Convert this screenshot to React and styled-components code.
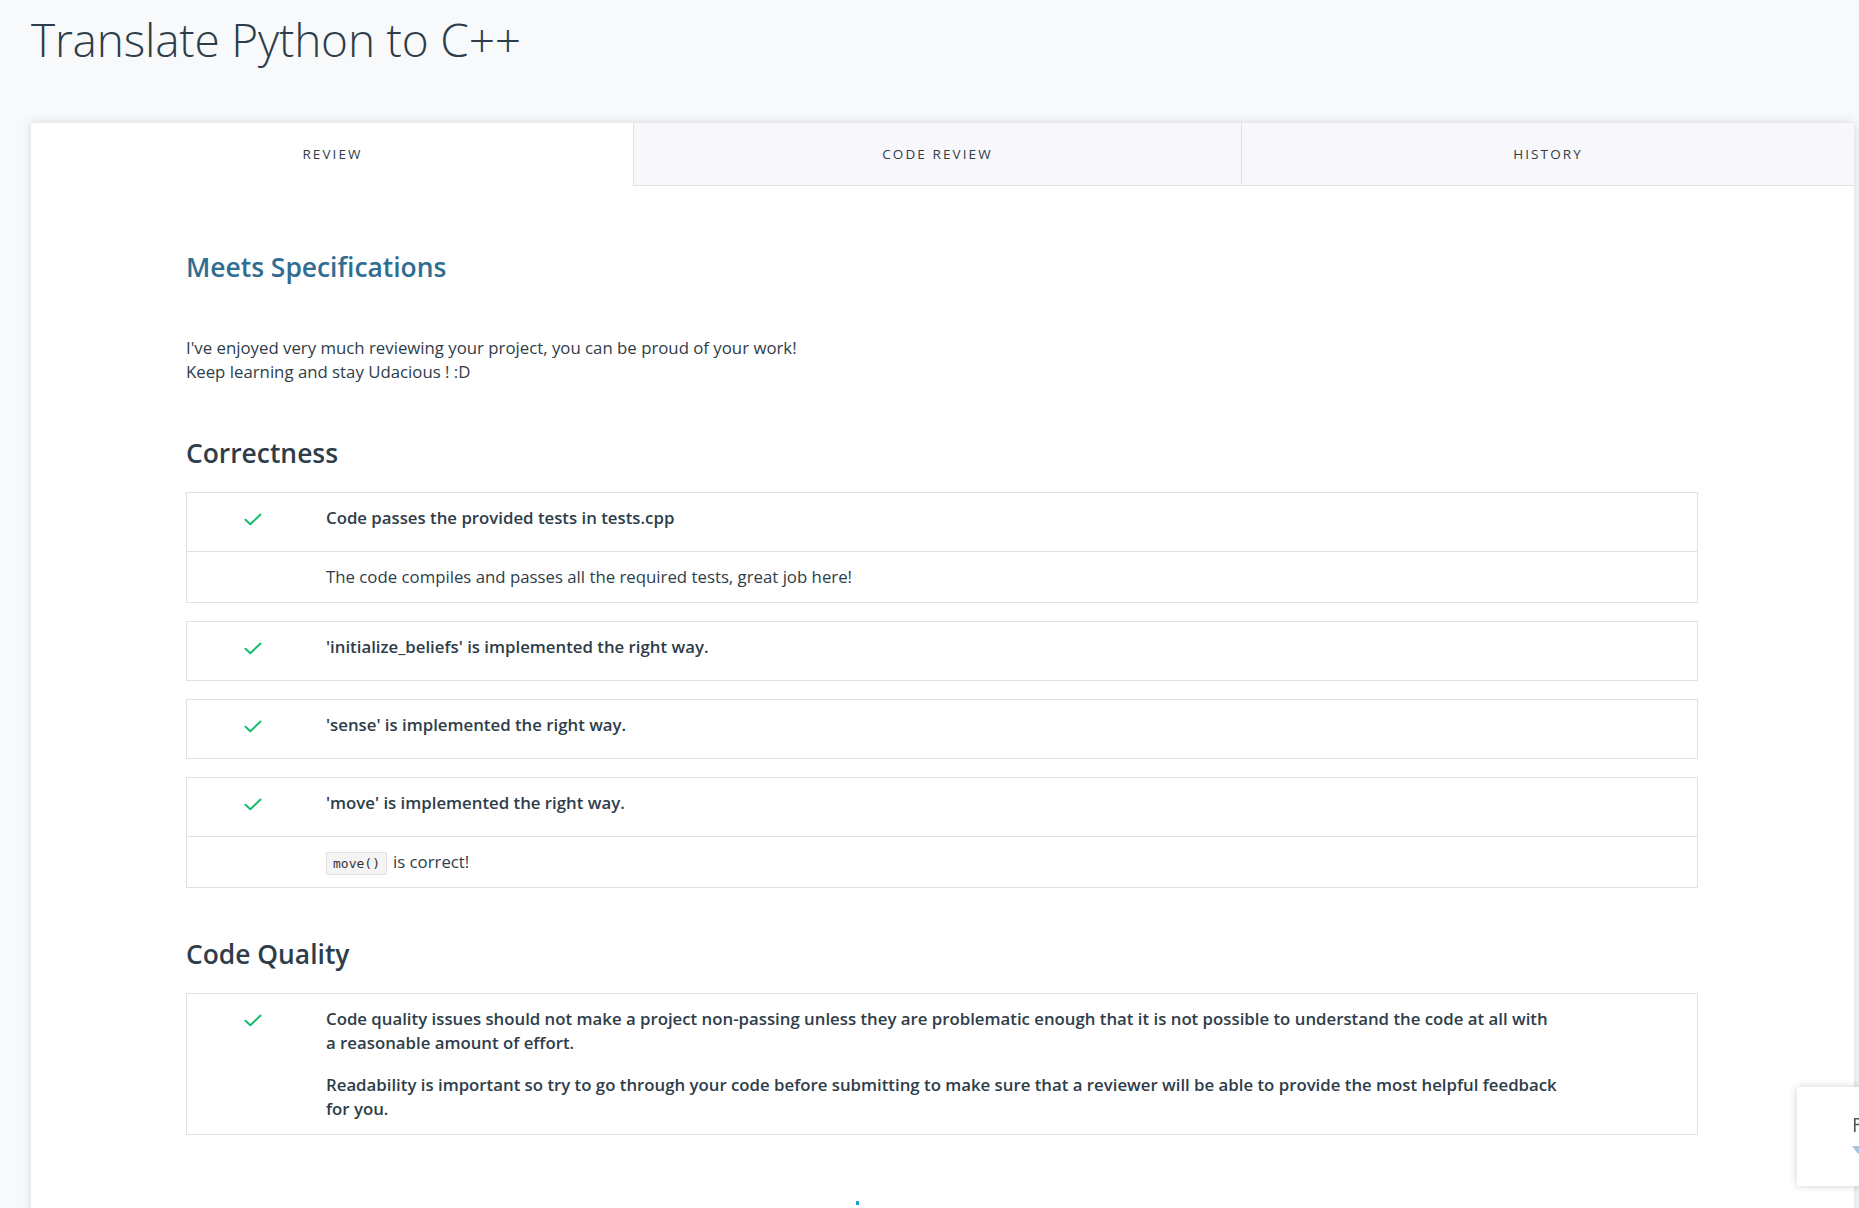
import React from "react";
import styled, { createGlobalStyle } from "styled-components";

const Global = createGlobalStyle`
  html, body { margin: 0; padding: 0; }
  body {
    background: #f8f9fb;
    font-family: "Open Sans", "Noto Sans", sans-serif;
    color: #2e3d49;
    overflow: hidden;
  }
`;

const Page = styled.div`
  padding: 0 5px 0 31px;
  min-height: 1208px;
  box-sizing: border-box;
`;

const Title = styled.h1`
  margin: 0;
  padding: 11px 0 0 0;
  height: 123px;
  box-sizing: border-box;
  font-weight: 300;
  font-size: 46px;
  line-height: 56px;
  color: #2e3d49;
  letter-spacing: -0.2px;
`;

const Card = styled.div`
  background: #fff;
  box-shadow: 0 0 10px rgba(0, 0, 0, 0.14);
  min-height: 1100px;
`;

const Tabs = styled.div`
  display: grid;
  grid-template-columns: 602fr 608fr 613fr;
  height: 63px;
`;

const Tab = styled.div`
  display: flex;
  align-items: center;
  justify-content: center;
  font-size: 13.5px;
  letter-spacing: 2.1px;
  text-transform: uppercase;
  color: #2e3d49;
  background: ${(p) => (p.$active ? "#fff" : "#f8f7fb")};
  border-bottom: 1px solid ${(p) => (p.$active ? "transparent" : "#dbe2e8")};
  border-left: 1px solid ${(p) => (p.$active ? "transparent" : "#dbe2e8")};
  box-sizing: border-box;
`;

const Content = styled.div`
  padding: 64px 156px 0 155px;
`;

const Verdict = styled.h2`
  margin: 0 0 52px;
  font-size: 26.4px;
  line-height: 34px;
  font-weight: 600;
  color: #2f6d91;
`;

const Text = styled.p`
  margin: 0;
  font-size: 16.8px;
  line-height: 24px;
  color: #2e3d49;
`;

const Section = styled.h3`
  margin: ${(p) => (p.$afterBox ? "49px" : "52px")} 0 22px;
  font-size: 26.4px;
  line-height: 34px;
  font-weight: 600;
  color: #2e3d49;
`;

const Box = styled.div`
  border: 1px solid #dbe2e8;
  margin-bottom: 18px;
`;

const Row = styled.div`
  display: grid;
  grid-template-columns: 139px 1fr;
  box-sizing: border-box;
  min-height: ${(p) => (p.$comment ? "0" : "58px")};
  padding: 13px 0;
  & + & {
    border-top: 1px solid #dbe2e8;
  }
`;

const IconCell = styled.div`
  display: flex;
  justify-content: flex-start;
  padding: 7px 0 0 57px;
`;

const Body = styled.div`
  padding-right: 131px;
  display: flex;
  flex-direction: column;
  gap: 18px;
`;

const Criterion = styled.p`
  margin: 0;
  font-size: 16.8px;
  line-height: 24px;
  font-weight: 600;
  color: #2e3d49;
`;

const Comment = styled.p`
  margin: 0;
  font-size: 16.8px;
  line-height: 24px;
  color: #2e3d49;
`;

const Code = styled.code`
  font-family: "DejaVu Sans Mono", "Liberation Mono", monospace;
  font-size: 13px;
  line-height: 1;
  background: #f4f4f4;
  border: 1px solid #e1e1e1;
  border-radius: 2px;
  padding: 3px 6px;
  color: #333;
  margin-right: 6px;
`;

const Spinner = styled.div`
  margin: 66px 0 0 670px;
  width: 3px;
  height: 4px;
  background: #1da1d8;
`;

const Floating = styled.div`
  position: fixed;
  left: 1797px;
  top: 1087px;
  width: 120px;
  height: 99px;
  background: #fff;
  box-shadow: 0 0 8px rgba(0, 0, 0, 0.18);
  border-radius: 2px;
  padding: 24px 0 0 55px;
  box-sizing: border-box;
  font-size: 20px;
  color: #555;
`;

const FloatIcon = styled.div`
  margin-top: 8px;
  width: 0;
  height: 0;
  border-left: 6px solid transparent;
  border-right: 6px solid transparent;
  border-top: 8px solid #aac4dc;
`;

const Check = () => (
  <svg width="18" height="13" viewBox="0 0 18 13" fill="none">
    <path d="M1.5 6.8 L6.3 11.2 L16.5 1.5" stroke="#16bd6e" strokeWidth="2" strokeLinecap="round" strokeLinejoin="round" />
  </svg>
);

const Criteria = ({ title, children }) => (
  <Box>
    <Row>
      <IconCell>
        <Check />
      </IconCell>
      <Body>
        {Array.isArray(title) ? title.map((t, i) => <Criterion key={i}>{t}</Criterion>) : <Criterion>{title}</Criterion>}
      </Body>
    </Row>
    {children && (
      <Row $comment>
        <div />
        <Body>
          <Comment>{children}</Comment>
        </Body>
      </Row>
    )}
  </Box>
);

export default function App() {
  return (
    <>
      <Global />
      <Page>
        <Title>Translate Python to C++</Title>
        <Card>
          <Tabs>
            <Tab $active>Review</Tab>
            <Tab>Code Review</Tab>
            <Tab>History</Tab>
          </Tabs>
          <Content>
            <Verdict>Meets Specifications</Verdict>
            <Text>I've enjoyed very much reviewing your project, you can be proud of your work!</Text>
            <Text>Keep learning and stay Udacious ! :D</Text>

            <Section>Correctness</Section>
            <Criteria title="Code passes the provided tests in tests.cpp">
              The code compiles and passes all the required tests, great job here!
            </Criteria>
            <Criteria title="'initialize_beliefs' is implemented the right way." />
            <Criteria title="'sense' is implemented the right way." />
            <Criteria title="'move' is implemented the right way.">
              <Code>move()</Code>is correct!
            </Criteria>

            <Section $afterBox>Code Quality</Section>
            <Criteria
              title={[
                "Code quality issues should not make a project non-passing unless they are problematic enough that it is not possible to understand the code at all with a\u00A0reasonable amount of effort.",
                "Readability is important so try to go through your code before submitting to make sure that a reviewer will be able to provide the most helpful feedback for you.",
              ]}
            />
            <Spinner />
          </Content>
        </Card>
        <Floating>
          F
          <FloatIcon />
        </Floating>
      </Page>
    </>
  );
}
